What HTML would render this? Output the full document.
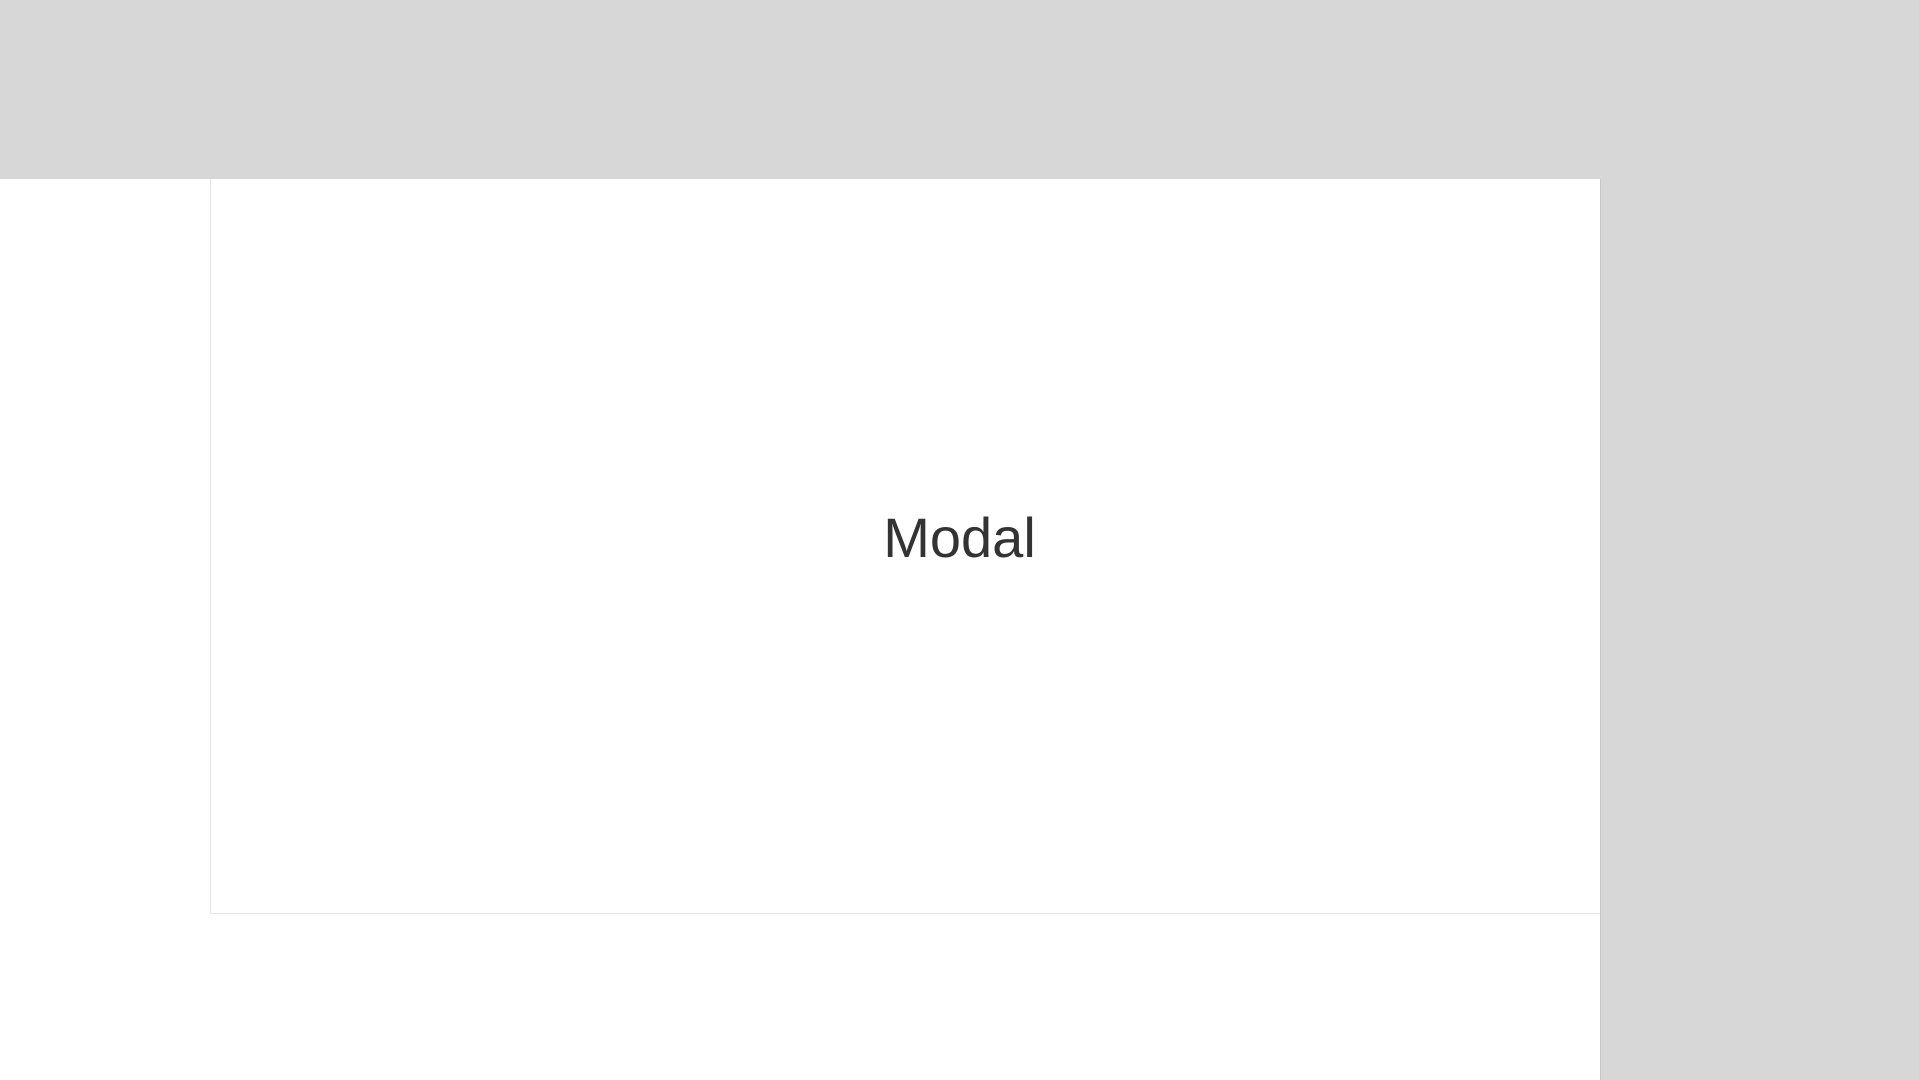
<!DOCTYPE html>
<html><head><meta charset="utf-8"><style>
html,body{margin:0;padding:0;width:1919px;height:1080px;overflow:hidden;background:#fff;position:relative;font-family:"Liberation Sans",Arial,sans-serif}
.top{position:absolute;left:0;top:0;width:1919px;height:179px;background:#d7d7d7}
.right{position:absolute;left:1600px;top:179px;width:319px;height:901px;background:#d7d7d7;border-left:1px solid #c8c8c8;box-sizing:border-box}
.box{position:absolute;left:210px;top:179px;width:1390px;height:735px;border-left:1px solid #e6e6e6;border-bottom:1px solid #e6e6e6;box-sizing:border-box}
.t{position:absolute;left:0;width:1919px;top:510px;text-align:center;font-size:56px;line-height:56px;color:#333}
</style></head><body>
<div class="top"></div>
<div class="box"></div>
<div class="right"></div>
<div class="t">Modal</div>
</body></html>
